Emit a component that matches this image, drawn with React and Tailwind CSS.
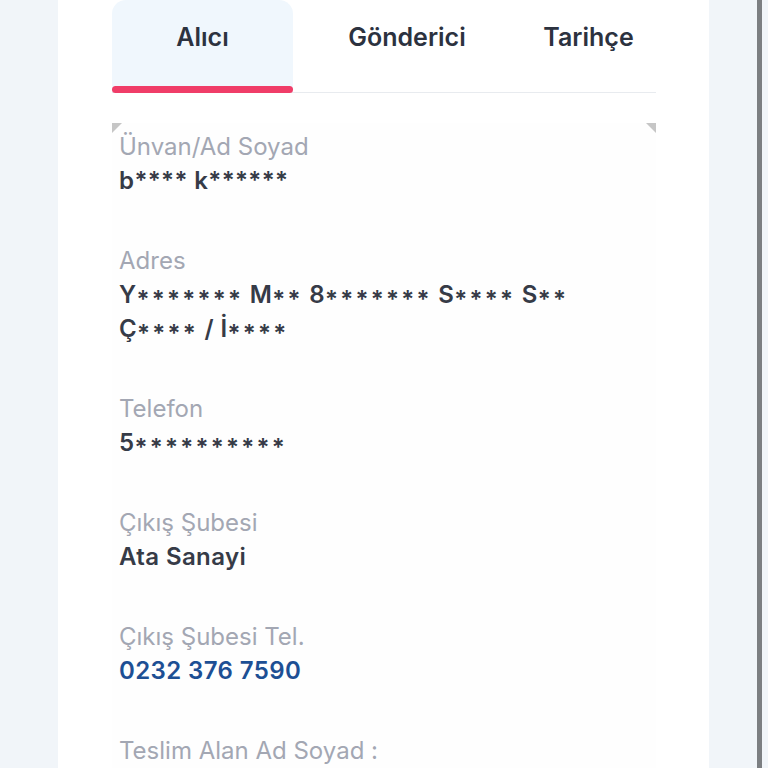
import React from "react";

// ─── Data ─────────────────────────────────────────────────────────────────────
const TABS = [
  { id: "alici", label: "Alıcı", width: "w-[181px]" },
  { id: "gonderici", label: "Gönderici", width: "w-[228px]" },
  { id: "tarihce", label: "Tarihçe", width: "w-[135px]" },
];

// mid: asterisks sit at cap-middle (after capitals / digits)
const FIELDS = [
  { label: "Ünvan/Ad Soyad", value: ["b**** k******"] },
  { label: "Adres", value: ["Y******* M** 8******* S**** S**", "Ç**** / İ****"], mid: true },
  { label: "Telefon", value: ["5**********"], mid: true },
  { label: "Çıkış Şubesi", value: ["Ata Sanayi"] },
  { label: "Çıkış Şubesi Tel.", value: ["0232 376 7590"], link: true },
  { label: "Teslim Alan Ad Soyad :", value: ["-"] },
];

// split masked text into runs so asterisks can be shifted/spaced
const MaskedText = ({ text, mid }) => {
  if (!mid) return text;
  const parts = text.split(/(\*+)/);
  return parts.map((p, i) =>
    p.startsWith("*") ? (
      <span key={i} className="leading-[8px] align-[-5px] tracking-[2.3px]">
        {p}
      </span>
    ) : (
      <React.Fragment key={i}>{p}</React.Fragment>
    )
  );
};

export default function App() {
  const active = "alici";

  return (
    <div
      className="h-[768px] w-full overflow-hidden flex bg-[#f1f5f9]"
      style={{ fontFamily: "Inter, 'Noto Sans', sans-serif" }}
    >
      {/* left gutter */}
      <div className="w-[58px] shrink-0" />

      {/* ── Card ── */}
      <div className="w-[651px] shrink-0 bg-white pl-[54px]">
        {/* Tabs */}
        <div className="w-[544px] flex border-b border-[#e8ebef] h-[93px]">
          {TABS.map((tab) => {
            const isActive = tab.id === active;
            return (
              <div
                key={tab.id}
                className={`${tab.width} relative flex justify-center pt-[20px] ${
                  isActive ? "bg-[#f0f7fd] rounded-t-[14px]" : ""
                }`}
              >
                <span className="text-[25px] leading-[34px] font-semibold text-[#2c323f]">
                  {tab.label}
                </span>
                {isActive && (
                  <div className="absolute left-0 right-0 bottom-[-1px] h-[7px] rounded-full bg-[#f03d68]" />
                )}
              </div>
            );
          })}
        </div>

        {/* Detail panel */}
        <div className="w-[544px] mt-[30px] relative pl-[7px] pt-[7px] bg-[#fefefe]">
          <div className="absolute left-0 top-0 w-0 h-0 border-t-[10px] border-r-[10px] border-t-[#c6c6c6] border-r-transparent" />
          <div className="absolute right-0 top-0 w-0 h-0 border-t-[10px] border-l-[10px] border-t-[#c6c6c6] border-l-transparent" />

          <div className="flex flex-col gap-[46px]">
            {FIELDS.map((f) => (
              <div key={f.label} className="flex flex-col">
                <span className="text-[24px] leading-[34px] text-[#a3a7b3]">{f.label}</span>
                {f.value.map((v) => (
                  <span
                    key={v}
                    className={`text-[24px] leading-[34px] font-semibold tracking-[0.4px] whitespace-nowrap ${
                      f.link ? "text-[#1d4f94]" : "text-[#363b47]"
                    }`}
                  >
                    <MaskedText text={v} mid={f.mid} />
                  </span>
                ))}
              </div>
            ))}
          </div>
        </div>
      </div>

      {/* right gutter + scrollbar */}
      <div className="flex-1 flex justify-end pr-[6px]">
        <div className="w-[5px] h-full bg-[#7c7f82]" />
      </div>
    </div>
  );
}
